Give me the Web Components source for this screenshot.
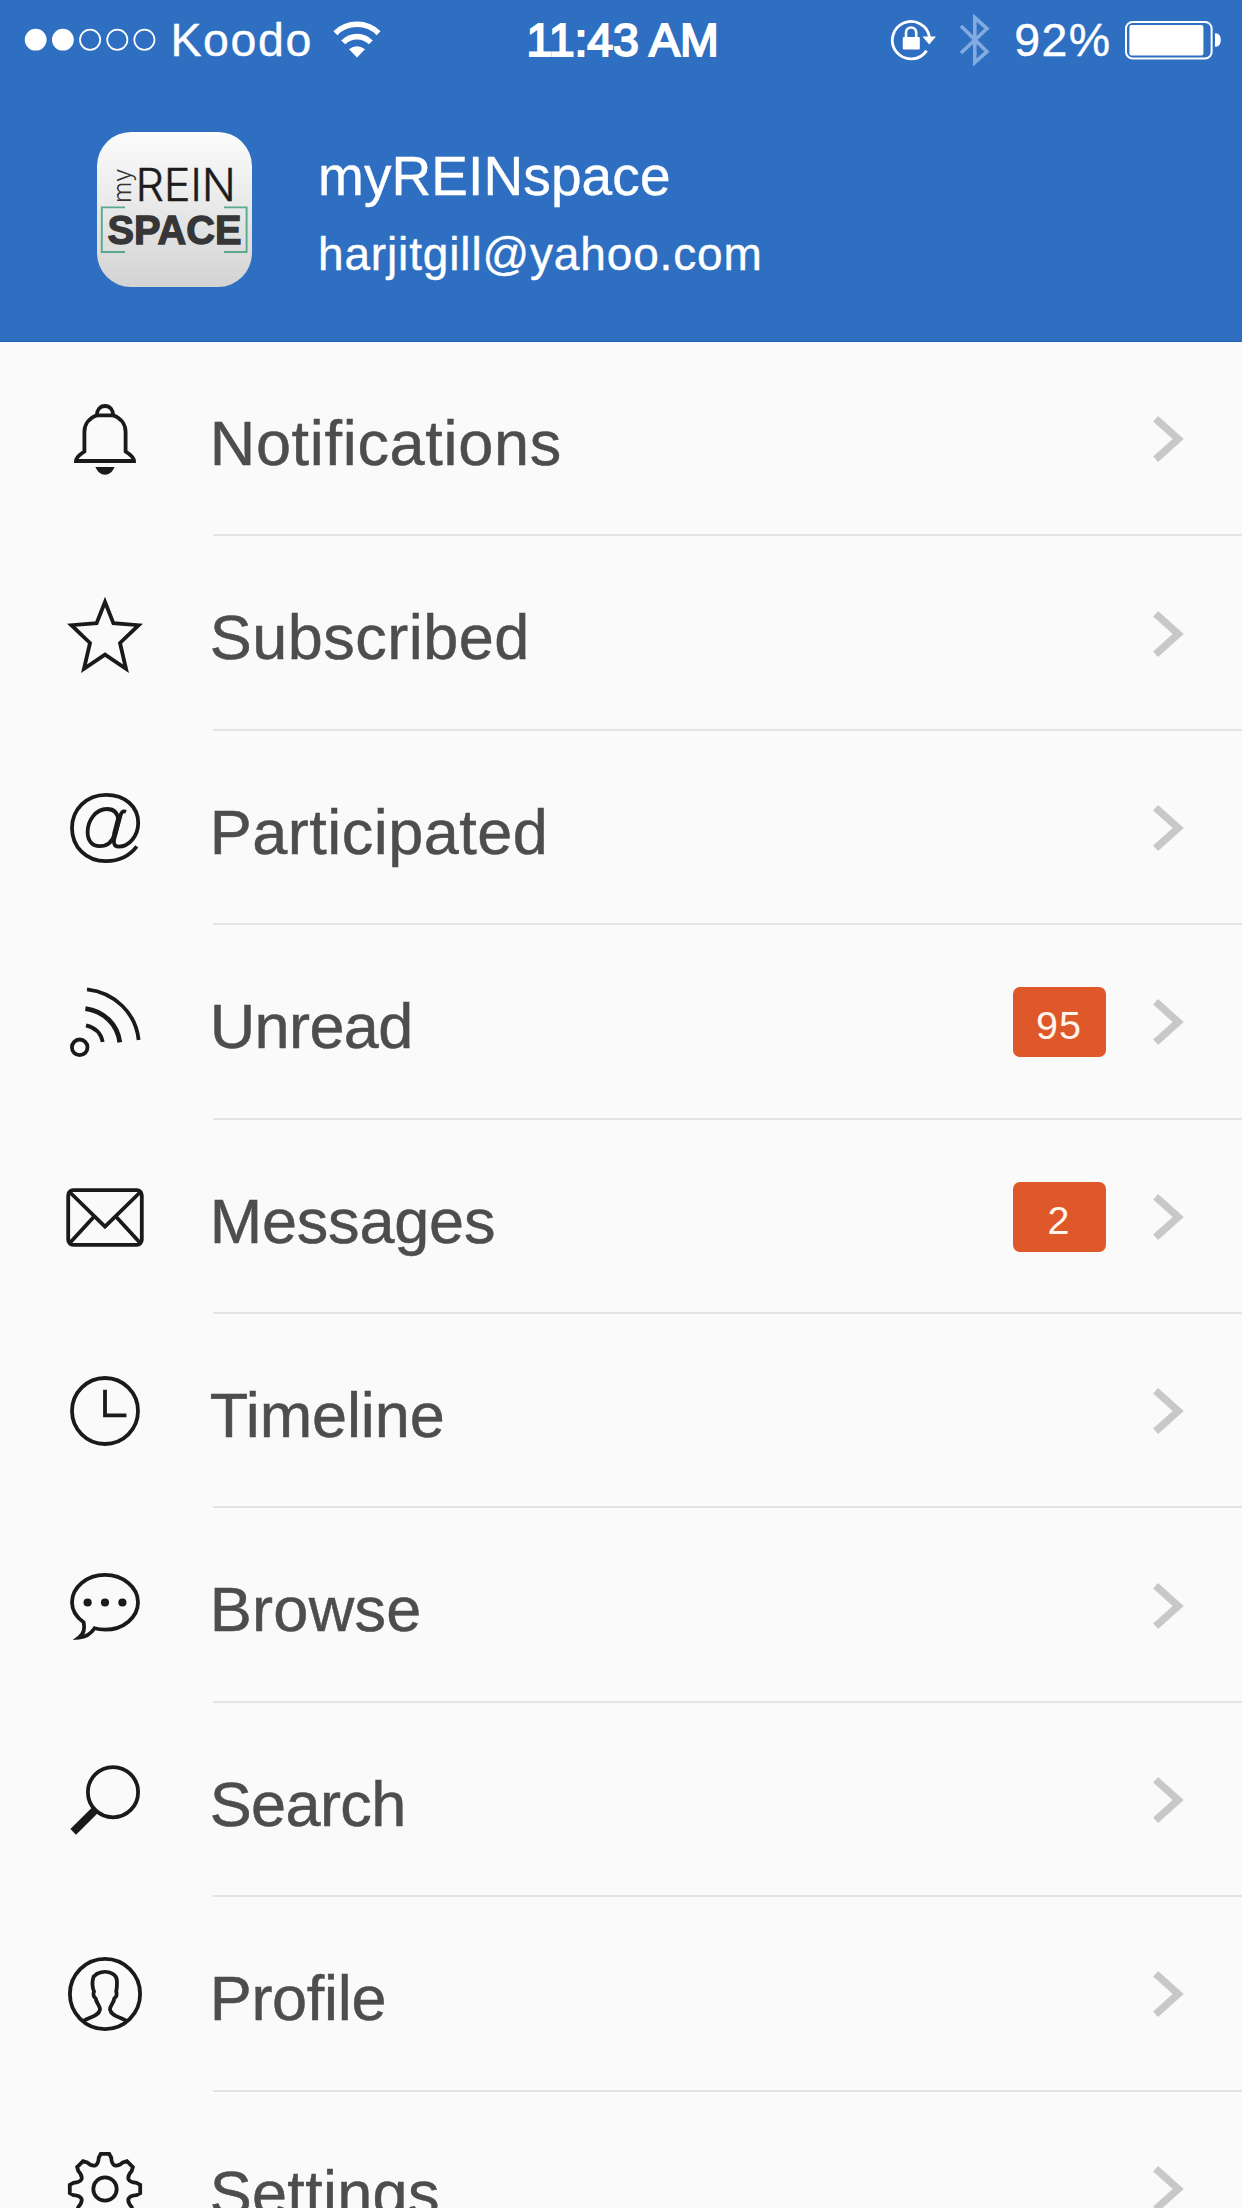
<!DOCTYPE html>
<html lang="en">
<head>
<meta charset="utf-8">
<title>myREINspace</title>
<style>
  body {
    margin: 0;
    height: 2208px;
    overflow: hidden;
    background: #fafafa;
    font-family: "Liberation Sans", Arial, sans-serif;
  }
</style>
</head>
<body>
<app-menu></app-menu>

<script>
// 8-tooth gear outline, one tooth per 45 degrees
function gearPath() {
  const tooth = [[-9.6, -23.6], [-6.6, -25.2], [-6.2, -31.5], [-4.2, -35.2], [4.2, -35.2], [6.2, -31.5], [6.6, -25.2], [9.6, -23.6]];
  let d = "";
  for (let i = 0; i < 8; i++) {
    const a = (i * Math.PI) / 4;
    const p = tooth.map(([x, y]) =>
      `${(x * Math.cos(a) - y * Math.sin(a)).toFixed(2)} ${(x * Math.sin(a) + y * Math.cos(a)).toFixed(2)}`
    );
    d += `${i ? "L" : "M"}${p[0]} Q${p[1]} ${p[2]} Q${p[2]} ${p[3]} L${p[4]} Q${p[5]} ${p[5]} Q${p[6]} ${p[7]} `;
  }
  return d + "Z";
}

// All icons are drawn around 0,0 in an 84x84 box
const ICONS = {
  bell: `
    <path d="M-8.2 -23.6C-8.2 -29 -5 -33 0 -33S8.2 -29 8.2 -23.6Z"/>
    <path d="M-8.2 -23.8C-16 -21 -20.6 -14.5 -20.6 -7V12.5C-24.5 15.5 -28.6 17 -29 22H29C28.6 17 24.5 15.5 20.6 12.5V-7C20.6 -14.5 16 -21 8.2 -23.8"/>
    <path d="M-9.6 28H9.6C7.5 33 4 35.7 0 35.7S-7.5 33 -9.6 28Z" fill="#1a1a1a" stroke="none"/>`,
  star: `<path stroke-miterlimit="10" d="M0 -32L8.4 -10.8L33.6 -8.8L15 9L21 34.8L0 20.6L-21 34.8L-15 9L-33.6 -8.8L-8.4 -10.8Z"/>`,
  at: `
    <path d="M31.8 18.4C24 28.6 13 33.2 1 33.2C-19 33.2 -33 18.8 -33 0C-33 -18.6 -18.5 -33.2 1 -33.2C20 -33.2 33.2 -21.5 33.2 -5C33.2 8 24 18.6 13.5 18.6C9.4 18.6 8.2 15.4 9.2 11L15.2 -11.5C16.2 -15.6 17.6 -17.6 21 -16.2"/>
    <path d="M13.4 -7C13 -15.5 8.4 -19 2 -19C-9.6 -19 -17.4 -7 -17.4 4C-17.4 13 -12.6 18.2 -5.4 18.2C2.6 18.2 7.6 13 9.6 6"/>
    <path stroke-width="5" d="M13.8 -10L9.4 7"/>`,
  feed: `
    <circle cx="-25.3" cy="25.3" r="7.8"/>
    <path d="M-19 3.4C-10.5 5.4 -4 11 -2.3 20"/>
    <path stroke-width="4.8" d="M-19.6 -13.4C-1.5 -11 12.5 2 14.8 20.4"/>
    <path d="M-18 -32.6C9.5 -29.5 31 -9 33.6 18"/>`,
  mail: `
    <rect x="-36.8" y="-26.8" width="73.6" height="54.6" rx="5"/>
    <path d="M-35.4 -25L0 9.6L35.4 -25M-11.3 0L-35 25.8M11.3 0L35 25.8"/>`,
  clock: `<circle r="33"/><path d="M0 -21.3V4.4H21.4"/>`,
  chat: `
    <path d="M-21.4 16.2C-29 11 -33 4.2 -33 -3.7A33 27.4 0 1 1 0 23.7C-3.6 23.7 -7 23.3 -10.4 22.3C-14 27.6 -19.6 31.2 -26 31.6C-21.6 28.4 -20 22.4 -21.4 16.2Z"/>
    <g fill="#1a1a1a" stroke="none"><circle cx="-17.4" cy="-3.5" r="4.1"/><circle cy="-3.5" r="4.1"/><circle cx="17.4" cy="-3.5" r="4.1"/></g>`,
  search: `<circle cx="8" cy="-7.8" r="25.1"/><path stroke-width="8" d="M-9.4 9.6L-31.8 31.8"/>`,
  profile: `
    <circle r="35.1"/>
    <path d="M-21.6 27C-15.5 23 -6.5 22.6 -5 15.6C-5 11 -8.6 9.4 -9.4 4.4C-11 3.4 -12.4 .4 -11 -2.4C-12.4 -6 -13 -12.6 -11.4 -17.4C-9.8 -18.6 -8.6 -20.2 -7 -20.6C-3 -22.6 3 -22.6 7 -20.6C10.6 -19 12 -16.4 12 -12C12 -8 11.8 -5 11.2 -2.4C12.6 .4 11 3.4 9.4 4.4C8.6 9.4 5 11 5 15.6C6.5 22.6 15.5 23 21.6 27"/>`,
  gear: `<circle r="11.7"/><path d="${gearPath()}"/>`,
};

class StatusBar extends HTMLElement {
  constructor() {
    super();
    this.attachShadow({ mode: "open" }).innerHTML = `
      <style>
        :host {
          display: grid;
          grid-template-columns: 1fr auto 1fr;
          align-items: center;
          height: 80px;
          padding: 0 21px 0 24px;
          font-size: 46.5px;
          line-height: 60px;
          color: #fff;
          white-space: nowrap;
        }
        .side { display: flex; align-items: center; }
        .right { justify-content: flex-end; }
        .carrier { margin: 0 20px 0 13.5px; letter-spacing: 1.6px; -webkit-text-stroke: 0.4px #fff; }
        .time { letter-spacing: -0.1px; -webkit-text-stroke: 2px #fff; }
        .percent { margin: 0 12.5px 0 23px; letter-spacing: 1.4px; -webkit-text-stroke: 0.4px #fff; }
        svg { display: block; flex: none; }
      </style>
      <div class="side">
        <svg width="133" height="24" viewBox="0 0 133 24" fill="none" stroke="#fff" stroke-width="1.7">
          <circle cx="11.7" cy="11.7" r="10.9" fill="#fff" stroke="none"/>
          <circle cx="38.9" cy="11.7" r="10.9" fill="#fff" stroke="none"/>
          <circle cx="66.1" cy="11.7" r="10.1"/>
          <circle cx="93.3" cy="11.7" r="10.1"/>
          <circle cx="120.4" cy="11.7" r="10.1"/>
        </svg>
        <span class="carrier">Koodo</span>
        <svg width="48" height="38" viewBox="0 0 48 38" fill="none" stroke="#fff" stroke-width="5.6">
          <path d="M2.4 12.2A30.6 30.6 0 0 1 45.6 12.2"/>
          <path d="M10.2 21.4A19.4 19.4 0 0 1 37.8 21.4"/>
          <path d="M16 28.2Q24 22.4 32 28.2L24 36.4Z" fill="#fff" stroke="none"/>
        </svg>
      </div>
      <span class="time">11:43 AM</span>
      <div class="side right">
        <svg width="48" height="44" viewBox="0 0 48 44" fill="none" stroke="#fff" stroke-width="2.8">
          <path d="M36.6 32.6A18.7 18.7 0 1 1 39.6 20"/>
          <path d="M32.4 18.6H46L39.2 26.4Z" fill="#fff" stroke="none"/>
          <path d="M16 20V14.6a5.1 5.1 0 0 1 10.2 0V20" stroke-width="2.6"/>
          <rect x="12.8" y="19" width="17" height="12.4" rx="1" fill="#fff" stroke="none"/>
        </svg>
        <svg width="32" height="56" viewBox="0 0 32 56" fill="none" stroke="#84abdf" stroke-width="3.6" style="margin-left:21px">
          <path d="M2 14L28 39.6L15.8 50.4V5.6L28 16.6L2 41"/>
        </svg>
        <span class="percent">92%</span>
        <svg width="97" height="40" viewBox="0 0 97 40">
          <rect x="2" y="2" width="85.6" height="36.4" rx="6.5" fill="none" stroke="#fff" stroke-width="2"/>
          <rect x="5.4" y="5" width="74" height="30.6" rx="2" fill="#fff"/>
          <path d="M91 13.2c3.8 0 5.8 2.6 5.8 6.8s-2 6.8-5.8 6.8z" fill="#fff"/>
        </svg>
      </div>
    `;
  }
}

class AppLogo extends HTMLElement {
  constructor() {
    super();
    this.attachShadow({ mode: "open" }).innerHTML = `
      <style>
        :host {
          display: block;
          flex: none;
          width: 155px;
          height: 155px;
          border-radius: 34px;
          background: linear-gradient(#fcfcfc, #e8e8e8 50%, #d3d3d3);
          overflow: hidden;
        }
        svg { display: block; }
      </style>
      <svg width="155" height="155" viewBox="0 0 155 155">
        <text x="38.5" y="69" font-family="Inter, 'Liberation Sans', sans-serif" font-weight="300" font-size="45" textLength="100.5" fill="#1c1c1c" stroke="#1c1c1c" stroke-width="0.4">REIN</text>
        <text transform="translate(34 71) rotate(-90)" font-family="Inter, 'Liberation Sans', sans-serif" font-weight="300" font-size="24.5" textLength="34.5" lengthAdjust="spacingAndGlyphs" fill="#333">my</text>
        <text x="10.5" y="112" font-weight="700" font-size="40.5" textLength="134" lengthAdjust="spacingAndGlyphs" fill="#363636" stroke="#363636" stroke-width="1.3">SPACE</text>
        <path d="M28 75.4H4.8V120H28M127 75.4H149.6V120H127" fill="none" stroke="#5aa88e" stroke-width="1.9"/>
      </svg>
    `;
  }
}

class ProfileHeader extends HTMLElement {
  constructor() {
    super();
    this.attachShadow({ mode: "open" }).innerHTML = `
      <style>
        :host {
          display: block;
          box-sizing: border-box;
          height: 342px;
          background: #2e6fc1;
          border-bottom: 1px solid #2363b9;
          color: #fff;
          -webkit-text-stroke: 0.4px #fff;
        }
        .account {
          display: flex;
          align-items: flex-start;
          gap: 66px;
          padding: 52px 0 0 97px;
        }
        app-logo { -webkit-text-stroke: 0; }
        .text { padding-top: 13px; }
        .name { font-size: 55px; line-height: 62px; letter-spacing: 0.1px; }
        .email { margin-top: 17px; font-size: 46px; line-height: 60px; letter-spacing: 0.85px; }
      </style>
      <status-bar></status-bar>
      <div class="account">
        <app-logo></app-logo>
        <div class="text">
          <div class="name"><slot name="name"></slot></div>
          <div class="email"><slot name="email"></slot></div>
        </div>
      </div>
    `;
  }
}

class MenuItem extends HTMLElement {
  constructor() {
    super();
    this.attachShadow({ mode: "open" });
  }

  connectedCallback() {
    const badge = this.getAttribute("badge");
    this.shadowRoot.innerHTML = `
      <style>
        :host {
          display: flex;
          align-items: center;
          box-sizing: border-box;
          height: 194.4px;
          padding: 0 52px 0 62.7px;
          background: linear-gradient(#e3e3e3, #e3e3e3) no-repeat 213px 100% / 100% 2px;
        }
        svg { display: block; flex: none; fill: none; }
        .icon { stroke: #1a1a1a; stroke-width: 3.8; }
        .label {
          flex: 1;
          margin-left: 63px;
          padding-top: 7.6px;
          font-size: 63px;
          line-height: 76px;
          letter-spacing: var(--tracking, 0.7px);
          color: #4d4d4d;
          -webkit-text-stroke: 0.5px #4d4d4d;
        }
        .badge {
          box-sizing: border-box;
          width: 93px;
          height: 70px;
          padding-top: 7px;
          margin-right: 44px;
          border-radius: 7px;
          background: #df5829;
          color: #fff6ee;
          font-size: 39.5px;
          line-height: 63px;
          letter-spacing: 1px;
          text-indent: -1px;
          text-align: center;
        }
      </style>
      <svg class="icon" width="84" height="84" viewBox="-42 -42 84 84">${ICONS[this.getAttribute("icon")]}</svg>
      <span class="label"><slot></slot></span>
      ${badge ? `<span class="badge">${badge}</span>` : ""}
      <svg width="40" height="50" viewBox="0 0 40 50" stroke="#c8c8c8" stroke-width="7.4">
        <path d="M5.6 4.8L28.2 25L5.6 45.2"/>
      </svg>
    `;
  }
}

class AppMenu extends HTMLElement {
  constructor() {
    super();
    this.attachShadow({ mode: "open" }).innerHTML = `
      <style>
        :host { display: block; height: 2208px; overflow: hidden; }
      </style>
      <profile-header>
        <span slot="name">myREINspace</span>
        <span slot="email">harjitgill@yahoo.com</span>
      </profile-header>
      <nav>
        <menu-item icon="bell">Notifications</menu-item>
        <menu-item icon="star" style="--tracking: 0.5px">Subscribed</menu-item>
        <menu-item icon="at" style="--tracking: 0.5px">Participated</menu-item>
        <menu-item icon="feed" badge="95" style="--tracking: -0.6px">Unread</menu-item>
        <menu-item icon="mail" badge="2" style="--tracking: -0.2px">Messages</menu-item>
        <menu-item icon="clock" style="--tracking: -0.1px">Timeline</menu-item>
        <menu-item icon="chat" style="--tracking: 0.3px">Browse</menu-item>
        <menu-item icon="search" style="--tracking: -0.6px">Search</menu-item>
        <menu-item icon="profile" style="--tracking: -0.3px">Profile</menu-item>
        <menu-item icon="gear" style="--tracking: 0.3px">Settings</menu-item>
      </nav>
    `;
  }
}

customElements.define("status-bar", StatusBar);
customElements.define("app-logo", AppLogo);
customElements.define("profile-header", ProfileHeader);
customElements.define("menu-item", MenuItem);
customElements.define("app-menu", AppMenu);
</script>
</body>
</html>
